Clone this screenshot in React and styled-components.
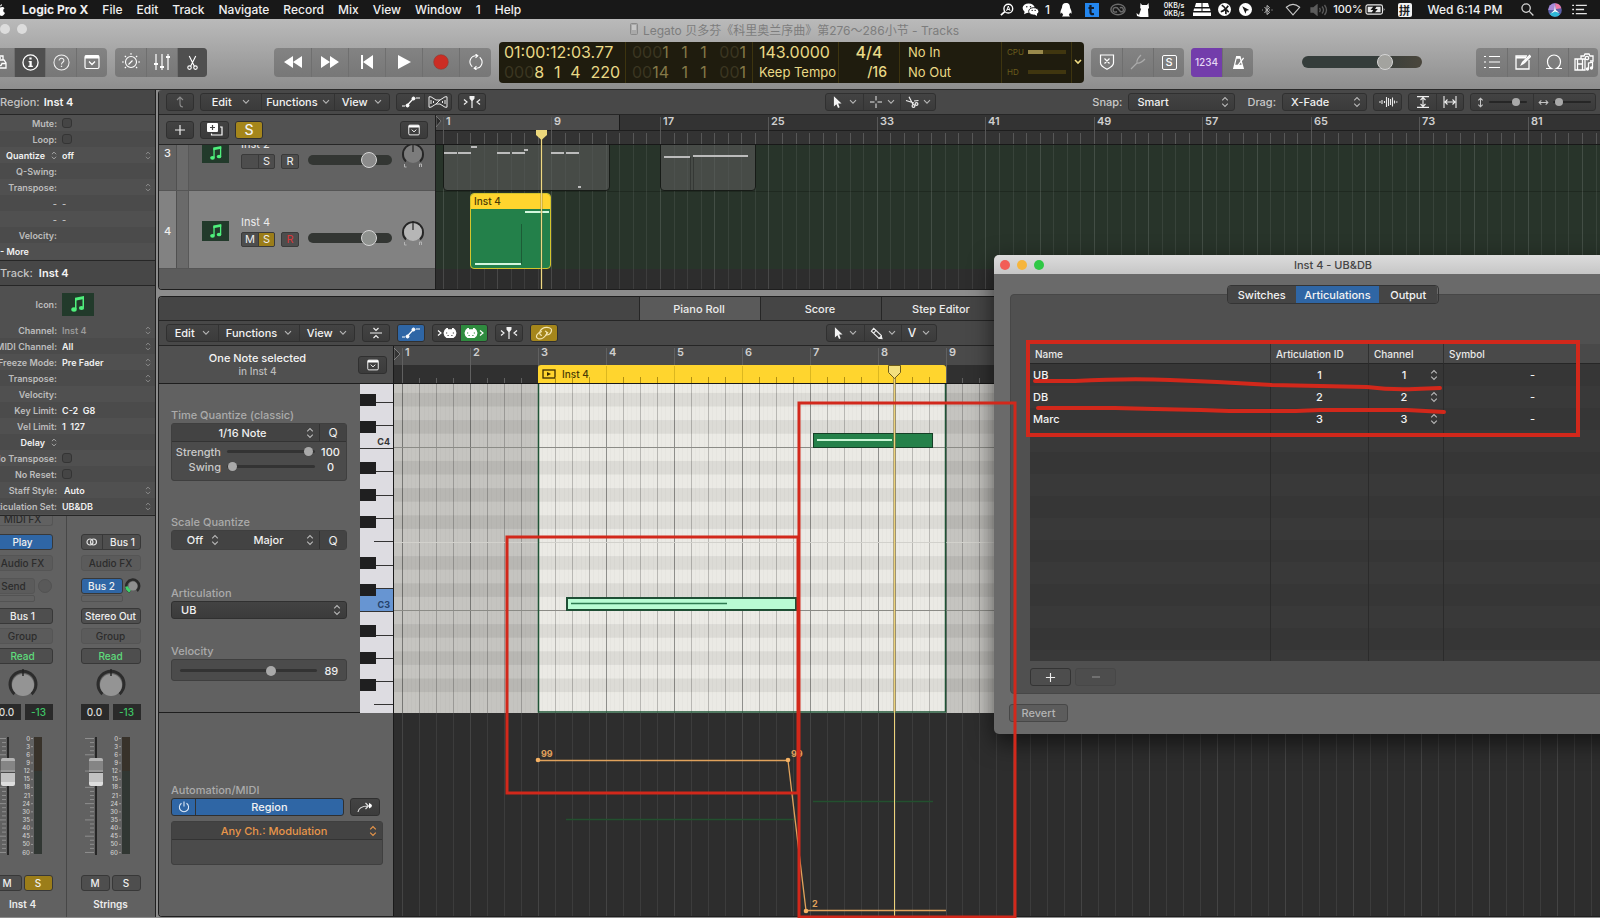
import React from "react";
import styled, { createGlobalStyle, css } from "styled-components";

const Global = createGlobalStyle`
  * { box-sizing: border-box; }
  body { margin: 0; background: #8f8f8f; font-family: Inter, "Noto Sans CJK SC", sans-serif; }
  button, input, select { font-family: inherit; margin: 0; padding: 0; border: 0; color: inherit; }
`;

/* ---------- icons ---------- */

const SHAPES = {
  apple: [12, 14, <path d="M8 1q-2 .5-2 2.600Q8 3.500 8 1M6 4.500C4 3.500 1 4 1 8c0 3 2 5 3.500 5 .8 0 1-.4 1.700-.4s1 .4 1.700.4C9.500 13 11 10.500 11 9.800 8.800 9 8.800 6.200 10.500 5.300 9.500 3.600 7.500 4 6 4.500z" fill="#fff" />],
  inbox: [16, 16, <g fill="none" stroke="#fff" strokeWidth="1.300"><path d="M4 6V2h8v4M1 14V9l2-3h10l2 3v5zM1 9.500h4l1 2h4l1-2h4M6 4h4" /></g>],
  info: [18, 18, <g><circle cx="9" cy="9" r="8" fill="none" stroke="#fff" strokeWidth="1.400" /><path d="M7.800 3.800h2.400v2H7.800zM7 7.500h3.300v5h1.200v1.200H6.600v-1.200h1.300V8.700H7z" fill="#fff" /></g>],
  help: [18, 18, <g fill="none" stroke="#f0f0f0" strokeWidth="1.100"><circle cx="9" cy="9" r="8" /><path d="M6.500 7c0-3.500 5.200-3.200 5 0-.1 1.800-2.500 1.800-2.500 4" /><path d="M9 12.500v1.300" strokeWidth="1.400" /></g>],
  drawer: [16, 16, <g fill="none" stroke="#fff"><rect x="1" y="1.500" width="14" height="13" rx="1.500" strokeWidth="1.200" /><path d="M1 3h14" strokeWidth="3" /><path d="M5 7.500l3 3 3-3" strokeWidth="1.300" /></g>],
  knobDial: [20, 18, <g fill="none" stroke="#fff" strokeWidth="1.100"><circle cx="10" cy="9" r="5.500" /><path d="M7.500 11.500l4-4M10 0v1.800M3.800 2.800l1.200 1.200M16.200 2.800L15 4M1 9h1.800M17.200 9H19M3.800 15.200L5 14M16.200 15.200L15 14" /></g>],
  mixer: [18, 18, <g stroke="#fff" strokeWidth="1.200"><path d="M3 1v16M9 1v16M15 1v16" /><path d="M1 11h4M7 14h4M13 4h4" strokeWidth="2" /></g>],
  scissors: [14, 18, <g fill="none" stroke="#fff" strokeWidth="1.200"><path d="M3.500 2l5.500 11M10.500 2L5 13" /><circle cx="3.800" cy="14.500" r="1.900" /><circle cx="10.200" cy="14.500" r="1.900" /></g>],
  rewind: [20, 14, <path d="M10 1v12L1 7zM19 1v12l-9-6z" fill="#fff" />],
  forward: [20, 14, <path d="M1 1v12l9-6zM10 1v12l9-6z" fill="#fff" />],
  toStart: [14, 14, <path d="M1 0h2v14H1zM13 0v14L3 7z" fill="#fff" />],
  play: [14, 14, <path d="M1 0v14l13-7z" fill="#fff" />],
  record: [16, 16, <circle cx="8" cy="8" r="7.300" fill="#cc2d24" stroke="#8d3a33" strokeWidth=".6" />],
  cycle: [18, 16, <g fill="none" stroke="#fff" strokeWidth="1.100"><path d="M10.500 1.800H9a6 6 0 0 0-4.500 10l.8.800M7.500 14.200H9a6 6 0 0 0 4.500-10l-.8-.8M8.500 0l2.300 1.800-2.300 2M9.500 12.200l-2.300 2 2.300 1.800" /></g>],
  shield: [16, 16, <g fill="none" stroke="#fff" strokeWidth="1.200"><path d="M1.500 1h13v8q0 3-6.500 6.300Q1.500 12 1.500 9zM5.500 4.500l5 5M10.500 4.500l-5 5" /></g>],
  fork: [16, 16, <path d="M1 15l6-6M7 9q-1-3 4-8M7 9q3 1 8-4" fill="none" stroke="#ababab" strokeWidth="1.200" />],
  metronome: [14, 16, <g><path d="M4.500 1h4.600l3.900 14H1zM5 4l-1.500 6.500h6.800L8.500 4z" fill="#fff" fillRule="evenodd" /><path d="M6.500 11l6-8" stroke="#fff" strokeWidth="1.300" /></g>],
  list: [16, 14, <g stroke="#fff" strokeWidth="1.200"><path d="M5 1.500h11M5 7h11M5 12.500h11M0 1.500h2M0 7h2M0 12.500h2" /></g>],
  note: [16, 16, <g fill="none" stroke="#fff" strokeWidth="1.300"><path d="M12 2H1v13h13V6" /><path d="M1 3.500h10" strokeWidth="2" /><path d="M15 1L7.500 8.500l-1 2 2-1L16 2" /></g>],
  loop: [18, 16, <path d="M1 14.500h5.500C3 12.500 2.500 9 2.500 7.500a6.500 6.500 0 0 1 13 0c0 1.500-.5 5-4 7H17" fill="none" stroke="#fff" strokeWidth="1.200" />],
  media: [20, 18, <g fill="none" stroke="#fff" strokeWidth="1.300"><path d="M7 6V3h3l1-2h4l1 2h3v5h-3" /><circle cx="13" cy="5" r="1.700" /><path d="M1 6h10v11H1zM3.500 6v11M8.500 6v11M3.500 11h5" /><path d="M14.500 16v-6l4-.8v5.800" /><circle cx="13.500" cy="16" r="1" fill="#fff" /><circle cx="17.500" cy="15" r="1" fill="#fff" /></g>],
  up: [12, 12, <path d="M9 11Q6 11 6 8V1M3 4l3-3 3 3" fill="none" stroke="#8b8b8b" strokeWidth="1.100" />],
  chevron: [8, 6, <path d="M1 1.200l3 3 3-3" fill="none" stroke="#b5b5b5" strokeWidth="1.100" />],
  yChevron: [8, 8, <path d="M1 2l3 3 3-3" fill="none" stroke="#f0dc82" strokeWidth="1.600" />],
  updown: [8, 12, <path d="M1.200 4.300L4 1.500l2.800 2.800M1.200 7.700L4 10.500l2.800-2.800" fill="none" stroke="#b9b9b9" strokeWidth="1.100" />],
  updownOrange: [8, 12, <path d="M1.200 4.300L4 1.500l2.800 2.800M1.200 7.700L4 10.500l2.800-2.800" fill="none" stroke="#e8964a" strokeWidth="1.200" />],
  automation: [20, 12, <g stroke="#fff" fill="#fff"><path d="M1 10h3M15 2h4" strokeWidth="1" /><path d="M6 9.500L12 3" strokeWidth="1.200" /><circle cx="6.500" cy="9.500" r="1.500" /><circle cx="12.500" cy="2.500" r="1.500" /></g>],
  flex: [20, 12, <g fill="none" stroke="#ededed"><path d="M1 .8v10.400h2L8 8h4l5 3.200h2V.8h-2L12 4H8L3 .8z" /><path d="M3 4v4M5.500 5v2M8 8l4-4M14.500 5v2M17 4v4" /></g>],
  catch: [18, 12, <g fill="none" stroke="#f2f2f2" strokeWidth="1.200"><path d="M1 3.500L4 6 1 8.500M17 3.500L14 6l3 2.500" /><path d="M6.500 0h5v2.500L9.600 5v7H8.400V5L6.500 2.500z" fill="#f2f2f2" stroke="none" /></g>],
  pointer: [10, 14, <path d="M1 0v11.500l2.800-2.600L5.600 13l1.800-.8-1.700-4H9.500z" fill="#f4f4f4" />],
  marquee: [12, 12, <path d="M6 0v4.500M6 7.500V12M0 6h4.500M7.500 6H12" stroke="#e8e8e8" />],
  snip: [14, 12, <g fill="none" stroke="#eee" strokeWidth="1.200"><path d="M1 4.500L9 7M4 .8L8 8.500M9 5l4.500-.5" /><circle cx="8.500" cy="10" r="1.400" /><circle cx="11.500" cy="8" r="1.400" /></g>],
  wave: [20, 12, <path d="M1 6h2M4 4v4M6.500 5v2M8.500 1v10M10.500 2v8M12.500 3v6M14.500 1.500v9M16.500 4.500v3M18 6h1.500" stroke="#e8e8e8" strokeWidth="1.100" />],
  fitV: [14, 12, <path d="M1 .6h12M1 11.400h12M7 1.500v9M4.500 4L7 1.500 9.500 4M4.500 8L7 10.500 9.500 8" fill="none" stroke="#ededed" strokeWidth="1.100" />],
  fitH: [14, 12, <path d="M1 0v12M13 0v12M2 6h10M4.500 3.500L2 6l2.500 2.500M9.500 3.500L12 6 9.500 8.500" fill="none" stroke="#ededed" strokeWidth="1.100" />],
  zoomV: [8, 12, <path d="M4 1v10M1.500 3.500L4 1l2.500 2.500M1.500 8.500L4 11l2.500-2.500" fill="none" stroke="#c4c4c4" strokeWidth="1.200" />],
  zoomH: [12, 8, <path d="M1 4h10M3.500 1.500L1 4l2.500 2.500M8.500 1.500L11 4 8.500 6.500" fill="none" stroke="#c4c4c4" strokeWidth="1.200" />],
  plus: [12, 12, <path d="M6 1v10M1 6h10" stroke="#eee" strokeWidth="1.200" />],
  minus: [12, 12, <path d="M2 6h8" stroke="#8f8f8f" strokeWidth="1.100" />],
  duplicate: [16, 13, <g><rect x="0" y="0" width="11" height="9" rx="1" fill="#fff" /><path d="M5.500 2v5M3 4.500h5" stroke="#444" strokeWidth="1.200" /><path d="M13 4h2v8H4.500v-1.500" fill="none" stroke="#fff" strokeWidth="1.200" /></g>],
  notes: [16, 18, <g fill="#4ff07c"><path d="M5 2.800L14 1v3L5 5.800z" /><path d="M5 3h1.500v11H5zM12.500 2H14v10.500h-1.500z" /><ellipse cx="4" cy="14.500" rx="2.700" ry="2.200" /><ellipse cx="11.500" cy="13" rx="2.600" ry="2.100" /></g>],
  collapse: [14, 12, <g fill="none" stroke="#f0f0f0" strokeWidth="1.200"><path d="M1 6h12M4.500 1L7 3.500 9.500 1M4.500 11L7 8.500 9.500 11" /></g>],
  midiIn: [20, 12, <g><path d="M1 3.500L4 6 1 8.500" fill="none" stroke="#fff" strokeWidth="1.200" /><path d="M9.500 1H11v1.200h4V1h1.500q3 2 3 5t-3 5h-7q-3-2-3-5t3-5z" fill="#fff" /><path d="M9 6h1.200M10.500 8.500h1.200M14.300 8.500h1.200M15.800 6H17" stroke="#444" strokeWidth="1.200" /></g>],
  midiOut: [20, 12, <g><path d="M16 3.500L19 6l-3 2.500" fill="none" stroke="#fff" strokeWidth="1.200" /><path d="M3.500 1H5v1.200h4V1h1.500q3 2 3 5t-3 5h-7q-3-2-3-5t3-5z" fill="#fff" /><path d="M3 6h1.200M4.500 8.500h1.200M8.300 8.500h1.200M9.800 6H11" stroke="#2f8b3f" strokeWidth="1.200" /></g>],
  link: [18, 14, <g fill="none" stroke="#f3e6b4" strokeWidth="1.200"><path d="M7 9.500Q4 9 5 5.500 7 1 12 1.300q5 .4 4.500 3.500-1 4-5.500 4.200l2-3" /><path d="M10 5q3 1.200 1 4-3 4.500-7.500 3.800-3-1-1.500-4Q3.500 6 7 5.500" /></g>],
  pencil: [14, 14, <g fill="none" stroke="#eee" strokeWidth="1.200"><path d="M1.500 4.500L4 1.500l8 7.500.8 3.500L9.500 12zM4 6.500l2.500-3" /><path d="M10 12l2.500.3-.4-2.500z" fill="#eee" /></g>],
  stereo: [12, 8, <g fill="none" stroke="#e4e4e4" strokeWidth="1.200"><circle cx="4" cy="4" r="3" /><circle cx="7.500" cy="4" r="3" /></g>],
  power: [12, 12, <path d="M6 .5v5M3.500 2.300a4.600 4.600 0 1 0 5 0" fill="none" stroke="#dce8f6" strokeWidth="1.100" />],
  curve: [16, 12, <g fill="none" stroke="#ddd" strokeWidth="1.200"><path d="M1 11q1-6 10-6M8.500 2l3 3-3 3" /><path d="M12 2q6 2.500 0 5.500" fill="#fff" stroke="none" /></g>],
  clip: [14, 10, <g><rect x="1" y="1" width="12" height="8" fill="none" stroke="#3a2c00" strokeWidth="1.300" /><path d="M5 3v4l4-2z" fill="#3a2c00" /></g>],
  doc: [8, 12, <g><rect x=".5" y=".5" width="7" height="11" rx="1" fill="#a9a9a9" stroke="#8a8a8a" /><path d="M2 2h4v5H2z" fill="#c6c6c6" /></g>],
  magA: [16, 14, <g fill="none" stroke="#fff"><circle cx="9.500" cy="6" r="5" strokeWidth="1.600" /><path d="M5.500 9.500L1 13.500" strokeWidth="2" /><path d="M7.500 8.500l2-5.500 2 5.500M8.200 7h2.600" strokeWidth="1.100" /></g>],
  wechat: [18, 14, <g fill="#fff"><ellipse cx="7" cy="5.500" rx="6.500" ry="5" /><path d="M2 12l1-4 4 2z" /><ellipse cx="12.500" cy="9" rx="5.500" ry="4" stroke="#181818" /><path d="M16 14l-3-2 3-1z" /><g fill="#181818"><circle cx="5" cy="4" r=".8" /><circle cx="9" cy="4" r=".8" /><circle cx="10.800" cy="8" r=".7" /><circle cx="14" cy="8" r=".7" /></g></g>],
  qq: [12, 14, <path d="M6 0C3 0 2 2 2 4.500 1.500 6 0 8 .5 10.500q.3.500 1.500-1 .2 1.500 1.200 2.200L2 13.500h8l-1.200-1.800Q9.800 11 10 9.500q1.200 1.500 1.500 1C12 8 10.500 6 10 4.500 10 2 9 0 6 0z" fill="#fff" />],
  tApp: [14, 14, <g><rect width="14" height="14" fill="#2386ee" /><path d="M5.500 2v7.500q0 2 3.500 1.500M3.500 5H9" fill="none" stroke="#141c28" strokeWidth="2.200" /></g>],
  cc: [18, 14, <g fill="none" stroke="#6b6b6b" strokeWidth="1.600"><ellipse cx="9" cy="7" rx="8" ry="6" /><path d="M8 9.500Q3.500 11 3.500 7.500T8 5l4 4.500q3.500.500 3-2.500T11 5" /></g>],
  cat: [14, 14, <path d="M4.500 0l1.500 2h5l1.500-2 .5 5-1 1 .5 8H4.500L1 13l-.5-3L3 12l2-6-.8-1z" fill="#fff" />],
  disk: [18, 13, <path d="M3 0h5.500v4H1.800zM9.500 0H15l1.200 4H9.500zM1 5.500h7.500V8H.5zM9.500 5.500H17l.5 2.500h-8zM0 9.500h18V13H0z" fill="#fff" />],
  xCircle: [16, 14, <g><circle cx="8" cy="7" r="7" fill="#fff" /><path d="M5 2.500q5 2 4.500 9.500M12 3Q9 8 4 9.500M10 7l2.500 3" stroke="#181818" strokeWidth="1.800" fill="none" /></g>],
  compass: [14, 14, <g><circle cx="7" cy="7" r="7" fill="#fff" /><path d="M3.500 3.500l7.500 4-3 .8-1 3.200z" fill="#181818" /></g>],
  bt: [12, 14, <path d="M3.500 4l5 5.500-2.500 2V2.500l2.500 2-5 5.500M1 7h.8M4 7h.6M8 7h1M10.500 7h1" fill="none" stroke="#bdbdbd" />],
  wifi: [18, 14, <path d="M1.500 4.500Q9-2 16.500 4.500L9 13z" fill="none" stroke="#c8c8c8" strokeWidth="1.200" />],
  vol: [18, 12, <g stroke="#5c5c5c" fill="none" strokeWidth="1.300"><path d="M1 4h2.500L7 1v10L3.500 8H1z" fill="#5c5c5c" /><path d="M9.500 4q1.500 2 0 4M12 2.500q3 3.500 0 7M14.500 1q4 5 0 10" /></g>],
  battery: [22, 12, <g><rect x=".6" y="1" width="18" height="10" rx="2" fill="none" stroke="#e9e9e9" strokeWidth="1.200" /><path d="M20 4v4q1.800-2 0-4zM2.500 3h6l-3 3.500h3L7 9H2.500zM16.500 9h-6l3-3.500h-3L12 3h4.500z" fill="#e9e9e9" /></g>],
  search: [14, 14, <g fill="none" stroke="#d5d5d5" strokeWidth="1.400"><circle cx="5.500" cy="5.500" r="4.500" /><path d="M9 9l4.300 4.500" /></g>],
  siri: [16, 14, <g><circle cx="8" cy="7" r="6.800" fill="#5b5fa8" /><path d="M8 .2a6.800 6.800 0 0 1 6.300 5L9 6z" fill="#f07aa4" /><path d="M1.200 7A6.800 6.800 0 0 1 8 .2L8 7z" fill="#a88ad8" /><path d="M2.500 11L8 7l5 4.500a6.800 6.800 0 0 1-10.500-.5z" fill="#2fb9d8" /><path d="M8 1.500l.8 5.500 3.700 3-4.500-1.500L4 10.500 7.300 7z" fill="#fff" /></g>],
  menuList: [16, 12, <path d="M0 1.500h2M4 1.500h12M0 6h2M4 6h9M0 10.500h2M4 10.500h12" stroke="#e3e3e3" strokeWidth="1.600" />],
};

function Icon({ name, scale = 1 }) {
  const [w, h, body] = SHAPES[name];
  return (
    <svg width={Math.round(w * scale)} height={Math.round(h * scale)} viewBox={`0 0 ${w} ${h}`} aria-hidden="true">
      {body}
    </svg>
  );
}

/* ---------- shell ---------- */

const App_ = styled.div`
  position: relative;
  display: flex;
  flex-direction: column;
  min-height: 100vh;
  overflow: hidden;
  color: #ececec;
  font-size: 11px;
  svg { display: block; flex: none; }
`;

const MenuBar = styled.nav`
  display: flex;
  align-items: center;
  height: 19px;
  padding-right: 6px;
  background: #181818;
  color: #f0f0f0;
  font-size: 12px;
  line-height: 19px;
  white-space: nowrap;
`;
const AppleMark = styled.span`
  display: flex;
  justify-content: flex-end;
  width: 6px;
  margin-right: 9px;
  overflow: hidden;
`;
const MenuItem = styled.a`
  padding: 0 7px;
  color: inherit;
  text-decoration: none;
  font-weight: ${(p) => (p.$bold ? 700 : 500)};
`;
const Spacer = styled.div`flex: ${(p) => p.$grow || 1} 1 0;`;
const Status = styled.span`
  display: flex;
  justify-content: center;
  align-items: center;
  width: ${(p) => p.$w}px;
  font-size: ${(p) => p.$size || 12}px;
  font-weight: 500;
`;
const Speed = styled.span`
  font-size: 7px;
  line-height: 8px;
  font-weight: 600;
`;
const Ime = styled.span`
  width: 14px;
  height: 14px;
  border-radius: 2px;
  background: #f2f2f2;
  color: #1c1c1c;
  font: 700 11px/14px "Noto Sans CJK SC", sans-serif;
  text-align: center;
`;

const Chrome = styled.header`
  height: 71px;
  border-bottom: 1px solid #2a2a2a;
  background: linear-gradient(#bababa, #8e8e8e);
`;
const TitleRow = styled.div`
  display: flex;
  align-items: center;
  height: 20px;
  color: #7d7d7d;
  font-size: 12px;
`;
const Light = styled.i`
  width: ${(p) => p.$size || 10}px;
  height: ${(p) => p.$size || 10}px;
  border-radius: 50%;
  background: ${(p) => p.$color};
`;
const PaleLights = styled.div`
  display: flex;
  gap: 7px;
  width: 27px;
`;
const Title = styled.h1`
  display: flex;
  flex: 1;
  justify-content: center;
  align-items: center;
  gap: 5px;
  margin: 0 38px 0 0;
  font-size: 12px;
  font-weight: 400;
`;
const MainBar = styled.div`
  display: flex;
  align-items: center;
  height: 46px;
  padding-right: 2px;
`;
const BigGroup = styled.div`
  display: flex;
  height: 29px;
  margin-right: ${(p) => p.$mr || 0}px;
  border-radius: ${(p) => (p.$flush ? "0 4px 4px 0" : "4px")};
  overflow: hidden;
  background: linear-gradient(#838383, #777);
`;
const BigButton = styled.button`
  display: flex;
  justify-content: center;
  align-items: center;
  width: ${(p) => p.$w || 31}px;
  overflow: hidden;
  background: ${(p) => p.$bg || "transparent"};
  color: ${(p) => p.$fg || "#fff"};
  font-size: 10px;
  font-weight: 500;
  & + & { border-left: 1px solid #6f6f6f; }
`;
const HalfIcon = styled.span`
  width: 14px;
  display: flex;
  justify-content: flex-end;
  padding-right: 7px;
`;
const SquareS = styled.span`
  width: 15px;
  height: 15px;
  border: 1px solid #fff;
  border-radius: 2px;
  font-size: 11px;
  line-height: 13px;
`;

/* ---------- LCD ---------- */

const Lcd = styled.div`
  display: flex;
  width: 585px;
  height: 41px;
  margin-right: 7px;
  border-radius: 4px;
  overflow: hidden;
  background: #1f1c0e;
  color: #e9d987;
`;
const LcdCell = styled.div`
  display: flex;
  flex-direction: column;
  justify-content: space-evenly;
  width: ${(p) => p.$w}px;
  padding: 0 ${(p) => p.$px || 5}px;
  border-right: 1px solid #3d340f;
  font-size: 16px;
  font-weight: ${(p) => p.$weight || 400};
  line-height: 20px;
  white-space: nowrap;
  color: ${(p) => p.$color || "inherit"};
`;
const LcdRow = styled.div`
  display: flex;
  justify-content: ${(p) => p.$justify || "space-between"};
  align-items: center;
  font-size: ${(p) => p.$size || 16}px;
`;
const Dim = styled.span`color: #3b3621;`;
const Load = styled.div`
  width: 38px;
  height: 4px;
  background: #40360f;
`;
const LoadFill = styled.div`
  width: ${(p) => p.$w}px;
  height: 4px;
  background: #9a8a4c;
`;
const LcdTag = styled.span`
  color: #6b5c1c;
  font-size: 8px;
`;
const LcdMenu = styled.button`
  display: flex;
  align-items: center;
  justify-content: center;
  width: 12px;
  background: none;
`;

/* ---------- shared controls ---------- */

const thumb = css`
  appearance: none;
  width: ${(p) => p.$thumb}px;
  height: ${(p) => p.$thumb}px;
  margin-top: ${(p) => Math.round((p.$track - p.$thumb) / 2)}px;
  border: ${(p) => (p.$ring ? "1px solid #d6d6d6" : "0")};
  border-radius: 50%;
  background: ${(p) => p.$knob || "#a9a9a9"};
`;
const Range = styled.input.attrs({ type: "range" })`
  appearance: none;
  display: block;
  width: ${(p) => p.$w}px;
  height: ${(p) => Math.max(p.$thumb, p.$track)}px;
  background: none;
  &::-webkit-slider-runnable-track {
    height: ${(p) => p.$track}px;
    border-radius: ${(p) => Math.round(p.$track / 2)}px;
    background: ${(p) => p.$bg || "#333"};
  }
  &::-webkit-slider-thumb { ${thumb} }
`;

const Bar = styled.div`
  display: flex;
  align-items: center;
  gap: ${(p) => p.$gap || 6}px;
  height: 25px;
  padding: 0 4px 0 7px;
  border-bottom: 1px solid #262626;
  background: #484848;
`;
const Group = styled.div`
  display: flex;
  flex: none;
  height: 18px;
  border: 1px solid #303030;
  border-radius: 3px;
  overflow: hidden;
  background: linear-gradient(#434343, #3b3b3b);
`;
const Tool = styled.button`
  display: flex;
  flex: none;
  justify-content: space-evenly;
  align-items: center;
  width: ${(p) => p.$w}px;
  background: ${(p) => p.$bg || "transparent"};
  color: #f2f2f2;
  font-size: ${(p) => p.$size || 11}px;
  font-weight: 500;
  line-height: 16px;
  & + & { border-left: 1px solid ${(p) => (p.$noline ? "transparent" : "#333")}; }
`;
const BarLabel = styled.label`
  color: #c9c9c9;
  font-size: 11px;
  font-weight: 500;
`;
const SelectBox = styled.span`
  position: relative;
  display: flex;
  align-items: center;
  width: ${(p) => (p.$w ? p.$w + "px" : "auto")};
  flex: ${(p) => (p.$w ? "none" : 1)};
  height: ${(p) => p.$h || 18}px;
  border: ${(p) => (p.$bare ? "0" : "1px solid #303030")};
  border-radius: 3px;
  background: ${(p) => (p.$bare ? "none" : "linear-gradient(#434343, #3b3b3b)")};
  svg { position: absolute; right: ${(p) => (p.$bare ? 4 : 5)}px; pointer-events: none; opacity: ${(p) => (p.$bare ? 0.7 : 1)}; }
`;
const SelectField = styled.select`
  appearance: none;
  width: 100%;
  height: 100%;
  padding: 0 ${(p) => (p.$center ? 6 : 16)}px 0 ${(p) => p.$pl || 0}px;
  background: none;
  color: ${(p) => p.$color || "#f0f0f0"};
  font-size: ${(p) => p.$size || 11}px;
  font-weight: ${(p) => p.$weight || 500};
  text-align-last: ${(p) => (p.$center ? "center" : "left")};
`;
function Picker({ id, label, value, w, h, pl, size, weight, center, bare, color, icon = "updown", scale }) {
  return (
    <SelectBox $w={w} $h={h} $bare={bare}>
      <SelectField id={id} aria-label={label} $pl={pl} $size={size} $weight={weight} $center={center} $color={color} defaultValue={value}>
        <option value={value}>{value}</option>
      </SelectField>
      <Icon name={icon} scale={scale} />
    </SelectBox>
  );
}

/* ---------- inspector ---------- */

const Body = styled.div`
  display: flex;
  flex: 1;
  gap: 2px;
  padding-bottom: 2px;
  background: #8c8c8c;
`;
const Side = styled.aside`
  display: flex;
  flex: none;
  flex-direction: column;
  width: 156px;
  overflow: hidden;
  border-right: 1px solid #202020;
  background: #616161;
`;
const SideHead = styled.h2`
  display: flex;
  align-items: center;
  gap: ${(p) => p.$gap}px;
  height: 25px;
  margin: 0;
  border-bottom: 1px solid #262626;
  background: #474747;
  color: #c4c4c4;
  font-size: 11px;
  font-weight: 500;
  strong { color: #f4f4f4; font-weight: 600; }
`;
const Props = styled.div`
  padding-bottom: ${(p) => p.$pb || 0}px;
  border-bottom: 1px solid #262626;
  background: #4f4f4f;
`;
const PropRow = styled.div`
  display: flex;
  align-items: center;
  gap: 5px;
  height: ${(p) => p.$h || 16}px;
  background: ${(p) => (p.$alt ? "#4b4b4b" : "#505050")};
  font-size: 9px;
  font-weight: 600;
  white-space: nowrap;
`;
const PropName = styled.label`
  display: flex;
  flex: none;
  justify-content: flex-end;
  align-items: center;
  gap: 6px;
  width: 57px;
  overflow: hidden;
  color: ${(p) => (p.$strong ? "#f2f2f2" : "#bdbdbd")};
`;
const PropText = styled.span`
  color: ${(p) => p.$color || "#f2f2f2"};
  white-space: pre;
`;
const Check = styled.input.attrs({ type: "checkbox" })`
  appearance: none;
  width: 10px;
  height: 10px;
  border: 1px solid #343434;
  border-radius: 3px;
  background: #454545;
`;
const Tile = styled.span`
  display: flex;
  flex: none;
  justify-content: center;
  align-items: center;
  width: ${(p) => p.$w}px;
  height: ${(p) => p.$h}px;
  background: #223a2b;
`;

const REGION_ROWS = [
  { name: "Mute:", check: true },
  { name: "Loop:", check: true },
  { name: "Quantize", strong: true, pick: "off" },
  { name: "Q-Swing:" },
  { name: "Transpose:", pick: "\u00a0" },
  { name: "-", text: "-", dim: true },
  { name: "-", text: "-", dim: true },
  { name: "Velocity:" },
];
const TRACK_ROWS = [
  { name: "Channel:", pick: "Inst 4", color: "#9b9b9b" },
  { name: "MIDI Channel:", pick: "All" },
  { name: "Freeze Mode:", pick: "Pre Fader" },
  { name: "Transpose:", pick: "\u00a0" },
  { name: "Velocity:" },
  { name: "Key Limit:", text: "C-2  G8" },
  { name: "Vel Limit:", text: "1  127" },
  { name: "Delay", strong: true },
  { name: "No Transpose:", check: true },
  { name: "No Reset:", check: true },
  { name: "Staff Style:", pick: "Auto", pl: 2 },
  { name: "Articulation Set:", pick: "UB&DB" },
];
function Rows({ rows, group }) {
  return rows.map((r, i) => {
    const id = `${group}-${i}`;
    return (
      <PropRow key={id} $alt={i % 2 === 1}>
        <PropName htmlFor={r.check || r.pick ? id : undefined} $strong={r.strong}>
          {r.name}
          {r.strong && <Icon name="updown" scale={0.75} />}
        </PropName>
        {r.check && <Check id={id} />}
        {r.text && <PropText $color={r.dim && "#bdbdbd"}>{r.text}</PropText>}
        {r.pick && <Picker id={id} bare value={r.pick} h={16} size={9} weight={600} pl={r.pl} color={r.color} scale={0.75} />}
      </PropRow>
    );
  });
}

/* ---------- channel strips ---------- */

const Strips = styled.div`
  display: flex;
  flex: 1;
  justify-content: flex-end;
  padding-right: 1px;
`;
const Strip = styled.div`
  display: flex;
  flex: none;
  flex-direction: column;
  align-items: center;
  width: 88px;
  padding: 0 14px;
  border-left: 1px solid #474747;
  font-weight: 500;
`;
const Slot = styled.button`
  display: flex;
  justify-content: center;
  align-items: center;
  width: ${(p) => p.$w || 60}px;
  height: 16px;
  margin-bottom: ${(p) => p.$mb || 0}px;
  border: 1px solid ${(p) => (p.$off ? "#555" : "#383838")};
  border-radius: 3px;
  background: ${(p) => p.$bg || (p.$off ? "#5b5b5b" : "#4e4e4e")};
  color: ${(p) => p.$fg || (p.$off ? "#2c2c2c" : "#f0f0f0")};
  font-size: ${(p) => p.$size || 10}px;
  font-weight: 500;
  white-space: nowrap;
`;
const TopSlot = styled.div`
  height: 18px;
  width: 60px;
`;
const SlotCut = styled.div`
  width: 60px;
  height: 10px;
  margin-bottom: 8px;
  border: 1px solid #555;
  border-top: 0;
  border-radius: 0 0 3px 3px;
  color: #2c2c2c;
  font-size: 10px;
  line-height: 6px;
  text-align: center;
`;
const SplitMark = styled.span`
  display: flex;
  align-items: center;
  height: 14px;
  margin-right: 7px;
  padding-right: 4px;
  border-right: 1px solid #383838;
`;
const Pair = styled.div`
  display: flex;
  align-items: center;
  justify-content: space-between;
  width: 60px;
  margin-bottom: ${(p) => p.$mb || 0}px;
`;
const SubSlot = styled.div`
  align-self: flex-start;
  width: 42px;
  height: 7px;
  margin: 1px 0 6px;
  border: 1px solid #535353;
  border-radius: 2px;
`;
const Level = styled.output`
  width: 28px;
  height: 16px;
  background: #2a2a2a;
  color: ${(p) => p.$fg || "#dcdcdc"};
  font-size: 10px;
  line-height: 16px;
  text-align: center;
`;
const FaderBox = styled.div`
  position: relative;
  width: 60px;
  height: 120px;
  margin-bottom: 19px;
`;
const Fader = styled.input.attrs({ type: "range" })`
  appearance: none;
  position: absolute;
  left: 8px;
  top: 1px;
  width: 14px;
  height: 118px;
  writing-mode: vertical-lr;
  direction: rtl;
  background: none;
  &::-webkit-slider-thumb {
    appearance: none;
    width: 14px;
    height: 28px;
    border-radius: 2px;
    background: linear-gradient(#b5b5b5 0 3px, #858585 3px 12px, #9a9a9a 12px 14px, #4a4a4a 14px 15px, #c2c2c2 15px 24px, #dedede 24px);
  }
`;
const StripName = styled.div`
  margin-top: 6px;
  font-size: 10px;
  font-weight: 600;
  line-height: 14px;
`;
const DB = ["0", "3", "6", "9", "12", "15", "18", "21", "24", "30", "35", "40", "45", "50", "60"];

function FaderScale() {
  return (
    <svg width="60" height="120">
      {Array.from({ length: 29 }, (_, i) => (
        <rect key={i} x={i % 4 ? 9 : 4} y={2 + i * 4.07} width={i % 4 ? 4 : 9} height="1" fill="#8e8e8e" />
      ))}
      <rect x="14" y="1" width="2" height="118" fill="#262626" />
      <rect x="41" y="1" width="8" height="117" fill="#313733" />
      <rect x="41" y="1" width="8" height="34" fill="#38322a" />
      {DB.map((d, i) => (
        <text key={d} x="37" y={4.500 + i * 8.150} fontSize="6" textAnchor="end" fill="#cfcfcf">{d}</text>
      ))}
      {DB.map((d, i) => (
        <rect key={d} x="38" y={2 + i * 8.150} width="2" height="1" fill="#999" />
      ))}
    </svg>
  );
}
const Dial = styled.svg`margin-bottom: 6px;`;
function PanDial() {
  return (
    <Dial width="32" height="30">
      <path d="M7.500 26A13 13 0 1 1 24.500 26" fill="none" stroke="#2c2c2c" strokeWidth="3" />
      <circle cx="16" cy="17" r="11" fill="#949494" />
      <path d="M16 1v7" stroke="#222" strokeWidth="1.400" />
    </Dial>
  );
}
function ChannelStrip({ name, instrument, send, output, solo }) {
  return (
    <Strip>
      {instrument ? <SlotCut>MIDI FX</SlotCut> : <TopSlot />}
      {instrument ? (
        <Slot $bg="#2f66a5" $mb={5}>Play</Slot>
      ) : (
        <Slot $mb={5}><SplitMark><Icon name="stereo" /></SplitMark>Bus 1</Slot>
      )}
      <Slot $off $mb={7}>Audio FX</Slot>
      <Pair>
        <Slot $w={42} $off={!send} $bg={send && "#2f66a5"}>{send || "Send"}</Slot>
        <svg width="16" height="16">
          {send ? (
            <g fill="none">
              <circle cx="8" cy="8" r="4.500" fill="#8f8f8f" />
              <path d="M5 14A6.500 6.500 0 1 1 12 13" stroke="#2a2a2a" strokeWidth="2.500" />
              <path d="M5 13.500Q2 11.500 1.500 8.500" stroke="#3fd46c" strokeWidth="3" />
            </g>
          ) : (
            <circle cx="8" cy="8" r="6.500" fill="#595959" stroke="#525252" />
          )}
        </svg>
      </Pair>
      <SubSlot />
      <Slot $mb={4}>{output}</Slot>
      <Slot $off $mb={4}>Group</Slot>
      <Slot $fg="#5fdc7c" $mb={4}>Read</Slot>
      <PanDial />
      <Pair $mb={16}>
        <Level>0.0</Level>
        <Level $fg="#3fc566">-13</Level>
      </Pair>
      <FaderBox>
        <FaderScale />
        <Fader aria-label={`${name} volume`} min="0" max="100" defaultValue="77" />
      </FaderBox>
      <Pair>
        <Slot $w={29}>M</Slot>
        <Slot $w={29} $bg={solo && "#9b7d19"}>S</Slot>
      </Pair>
      <StripName>{name}</StripName>
    </Strip>
  );
}

/* ---------- arrangement ---------- */

const Main = styled.main`
  display: flex;
  flex: 1;
  min-width: 0;
  flex-direction: column;
  gap: 6px;
`;
const Panel = styled.section`
  display: flex;
  flex-direction: column;
  flex: ${(p) => (p.$fill ? 1 : "none")};
  min-height: 0;
  overflow: hidden;
  border: solid #1e1e1e;
  border-width: ${(p) => (p.$fill ? "1px 0 1px 1px" : "0 0 1px 1px")};
  border-radius: 4px 0 0 4px;
`;
const Split = styled.div`
  display: flex;
  flex: 1;
  min-width: 0;
`;
const TrackSide = styled.div`
  flex: none;
  width: 277px;
  border-right: 1px solid #1e1e1e;
  background: #616161;
`;
const TrackTools = styled.div`
  display: flex;
  align-items: center;
  gap: 6px;
  height: 30px;
  padding: 0 7px;
  border-bottom: 1px solid #262626;
  background: #525252;
`;
const TrackList = styled.div`
  display: flex;
  flex-direction: column;
  justify-content: flex-end;
  height: 144px;
  overflow: hidden;
`;
const Track = styled.div`
  display: flex;
  flex: none;
  height: 78px;
  border-bottom: 1px solid #555;
  background: ${(p) => (p.$on ? "#828282" : "#626262")};
`;
const TrackNo = styled.span`
  width: 18px;
  border-right: 1px solid #505050;
  padding-left: 5px;
  color: #efefef;
  font-size: 11px;
  font-weight: 500;
  line-height: 80px;
`;
const Grip = styled.span`
  width: 12px;
  border-right: 1px solid #585858;
  background: #6a6a6a;
`;
const TrackIcon = styled.div`padding: 30px 12px 0 13px;`;
const TrackBody = styled.div`
  width: 58px;
  margin-right: 9px;
  padding-top: 23px;
`;
const TrackName = styled.div`
  font-size: 11px;
  line-height: 16px;
`;
const Mini = styled.span`
  display: flex;
  gap: 6px;
  margin-top: 2px;
`;
const MiniGroup = styled.span`
  display: flex;
  height: 15px;
  border: 1px solid #3a3a3a;
  border-radius: 2px;
  overflow: hidden;
  background: #4d4d4d;
`;
const MiniButton = styled.button`
  width: 16px;
  background: ${(p) => p.$bg || "none"};
  color: ${(p) => p.$fg || "#efefef"};
  font-size: 11px;
  line-height: 13px;
  & + & { border-left: 1px solid #3a3a3a; }
`;
const TrackVol = styled.div`padding: 39px 7px 0 0;`;
const TrackPan = styled.div`padding-top: 27px;`;
const Blank = styled.div`
  flex: none;
  height: 20px;
  background: #5c5c5c;
`;

function TrackRow({ no, name, on }) {
  return (
    <Track $on={on}>
      <TrackNo>{no}</TrackNo>
      <Grip />
      <TrackIcon><Tile $w={27} $h={20}><Icon name="notes" scale={0.9} /></Tile></TrackIcon>
      <TrackBody>
        <TrackName>{name}</TrackName>
        <Mini>
          <MiniGroup>
            <MiniButton aria-label="Mute">{on ? "M" : ""}</MiniButton>
            <MiniButton $bg={on && "#9b7d19"}>S</MiniButton>
          </MiniGroup>
          <MiniGroup><MiniButton $fg={on && "#d8373a"}>R</MiniButton></MiniGroup>
        </Mini>
      </TrackBody>
      <TrackVol>
        <Range aria-label={`${name} volume`} $w={84} $track={10} $thumb={16} $ring $bg="#333633" $knob={on ? "#8f928f" : "#8b8b8b"} defaultValue="78" />
      </TrackVol>
      <TrackPan>
        <svg width="28" height="32">
          <path d="M7 21.500A10 10 0 1 1 21 21.500" fill="none" stroke="#262626" strokeWidth="2" />
          <circle cx="14" cy="14" r="9" fill={on ? "#b6b6b6" : "#7c7c7c"} />
          <path d="M14 3v9" stroke="#222" strokeWidth="1.200" />
          <path d="M5.500 24v3h2M20.500 27v-3h2v3" fill="none" stroke="#b4b4b4" />
        </svg>
      </TrackPan>
    </Track>
  );
}

const Canvas = styled.div`
  position: relative;
  display: flex;
  flex: 1;
  min-width: 0;
  flex-direction: column;
  overflow: hidden;
`;
const Ruler = styled.div`
  position: relative;
  height: ${(p) => p.$h}px;
  border-bottom: 1px solid #181818;
  background: ${(p) => p.$bg};
  overflow: hidden;
  svg { position: absolute; inset: 0; }
`;
const BarNo = styled.span`
  position: absolute;
  top: ${(p) => p.$top}px;
  color: #cfcfcf;
  font-size: 11px;
  font-weight: 600;
  line-height: 12px;
`;
const Lanes = styled.div`
  position: relative;
  flex: 1;
  overflow: hidden;
  background: linear-gradient(#28342a 0 46px, #1f2920 46px 47px, #28342a 47px 124px, #2d2d2d 124px);
`;
const Region = styled.div`
  position: absolute;
  top: ${(p) => p.$top}px;
  left: ${(p) => p.$left}px;
  width: ${(p) => p.$w}px;
  height: ${(p) => p.$h}px;
  overflow: hidden;
  border: 1px solid ${(p) => (p.$on ? "#d4c42c" : "#171b17")};
  border-radius: 4px;
  background: ${(p) => (p.$on ? "#23804a" : "rgba(92, 92, 92, 0.6)")};
  svg { position: absolute; inset: 0; }
`;
const RegionName = styled.div`
  height: 15px;
  padding-left: 3px;
  background: #ffd52e;
  color: #4a3b05;
  font-size: 10px;
  font-weight: 500;
  line-height: 15px;
`;
const Playhead = styled.svg`
  position: absolute;
  top: ${(p) => p.$top}px;
  left: ${(p) => p.$left}px;
`;

const ARR_BAR = 13.560;
function Arrangement() {
  return (
    <Canvas>
      <Ruler $h={30} $bg="#333">
        <svg width="100%" height="30">
          <rect width="183" height="15" fill="#4b4b4b" />
          <rect y="15" width="100%" height="1" fill="#1e1e1e" />
          <rect x="183" width="1" height="15" fill="#1a1a1a" />
          <path d="M0 1l5 5-5 6z" fill="#2b2b2b" stroke="#8a8a8a" strokeWidth=".7" />
          {Array.from({ length: 150 }, (_, i) => (
            <rect key={i} x={Math.round(7 + i * ARR_BAR)} y={i % 8 ? 18 : 2} width="1" height={i % 8 ? 11 : 27} fill="#575757" />
          ))}
        </svg>
        {Array.from({ length: 18 }, (_, i) => (
          <BarNo key={i} $top={0} style={{ left: Math.round(10 + i * 8 * ARR_BAR) }}>{i * 8 + 1}</BarNo>
        ))}
      </Ruler>
      <Lanes>
        <svg width="100%" height="144">
          {Array.from({ length: 150 }, (_, i) => (
            <rect key={i} x={Math.round(7 + i * ARR_BAR)} width="1" height="144" fill="#fff" opacity={i % 4 ? 0.08 : 0.13} />
          ))}
        </svg>
        <Region $left={7} $top={-30} $w={167} $h={76}>
          <svg width="165" height="74">
            <path d="M0 37h13M14 37h13M53 37h13M68 37h13M107 37h13M122 37h13M27 31h6M80 34h4M134 71h3" stroke="#bcbcbc" strokeWidth="2" />
          </svg>
        </Region>
        <Region $left={224} $top={-30} $w={96} $h={76}>
          <svg width="94" height="74">
            <path d="M3 41h26M32 40h55" stroke="#bcbcbc" strokeWidth="2" />
            <path d="M29.500 41v33M32.500 41v33" stroke="#353835" />
          </svg>
        </Region>
        <Region $on $left={34} $top={48} $w={81} $h={76}>
          <RegionName>Inst 4</RegionName>
          <svg width="79" height="74">
            <path d="M4 70h46M54 18h24" stroke="#d3f7de" strokeWidth="2" />
            <path d="M50.500 30v40" stroke="#1c5c36" />
          </svg>
        </Region>
      </Lanes>
      <Playhead $left={99} $top={14} width="13" height="160">
        <path d="M6.500 9v151" stroke="#7d6f3c" strokeWidth="2" opacity=".6" />
        <path d="M6.500 9v151" stroke="#efd883" />
        <path d="M1 1h11v5l-5.500 5L1 6z" fill="#ecd87c" />
      </Playhead>
    </Canvas>
  );
}

/* ---------- piano roll ---------- */

const Tabs = styled.div`
  display: flex;
  height: 24px;
  border-bottom: 1px solid #262626;
  background: #454545;
`;
const Tab = styled.button`
  width: 121px;
  padding-right: 3px;
  border-left: 1px solid #262626;
  background: ${(p) => (p.$on ? "#5a5a5a" : "none")};
  color: #ececec;
  font-size: 11px;
  font-weight: 500;
`;
const RollSide = styled.div`
  display: flex;
  flex: none;
  flex-direction: column;
  width: 235px;
  border-right: 1px solid #1a1a1a;
  background: #616161;
`;
const RollHead = styled.div`
  display: flex;
  align-items: center;
  height: 38px;
  padding: 0 6px 0 0;
  border-bottom: 1px solid #1e1e1e;
  background: #505050;
  text-align: center;
`;
const RollInfo = styled.div`
  flex: 1;
  padding-right: 2px;
  font-size: 11px;
  font-weight: 500;
  line-height: 13px;
  color: #f4f4f4;
  small { display: block; color: #bcbcbc; font-size: 10px; }
`;
const RollMid = styled.div`
  display: flex;
  height: 329px;
  border-bottom: 1px solid #1e1e1e;
`;
const RollForm = styled.div`
  flex: 1;
  padding: 23px 13px 0 12px;
`;
const FieldName = styled.label`
  display: block;
  margin-top: ${(p) => p.$mt || 0}px;
  color: #ababab;
  font-size: 11px;
  font-weight: 500;
  line-height: 16px;
`;
const Sheet = styled.div`
  border: 1px solid #3f3f3f;
  border-radius: 3px;
  background: #4b4b4b;
  padding-bottom: ${(p) => p.$pb || 0}px;
`;
const SheetRow = styled.div`
  display: flex;
  height: 18px;
  border-bottom: ${(p) => (p.$line ? "1px solid #333" : "0")};
  background: #434343;
  & > * + * { border-left: 1px solid #333; }
`;
const FlatPick = styled(SelectBox)`
  height: 17px;
  border: 0;
  border-radius: 0;
  background: none;
`;
const QButton = styled.button`
  width: 27px;
  background: none;
  font-size: 12px;
  color: #ececec;
`;
const SliderLine = styled.div`
  display: flex;
  align-items: center;
  height: 15px;
  margin-top: ${(p) => p.$mt || 0}px;
  font-size: 11px;
  font-weight: 500;
  label { width: 49px; margin-right: 6px; text-align: right; color: #c9c9c9; }
  output { flex: 1; text-align: center; color: #f2f2f2; }
`;
const AutoForm = styled.div`padding: 69px 10px 0 12px;`;
const AutoRow = styled.div`
  display: flex;
  justify-content: space-between;
  margin-bottom: 5px;
  padding-right: 3px;
`;
const Blue = styled(Group)`
  width: 173px;
  background: #2f66a5;
`;

function Flat({ value, w, label }) {
  return (
    <FlatPick $w={w}>
      <SelectField aria-label={label} $center defaultValue={value}><option>{value}</option></SelectField>
      <Icon name="updown" />
    </FlatPick>
  );
}

const SEMI = 13.600;
const C4_BOTTOM = 63.300;
const BLACK = [1, 3, 6, 8, 10];
const isBlack = (n) => BLACK.includes(((n % 12) + 12) % 12);
const NOTES = Array.from({ length: 25 }, (_, i) => 4 - i);

function Keyboard() {
  return (
    <svg width="33" height="329" aria-hidden="true">
      <rect width="33" height="329" fill="#dddce1" />
      <rect y="204" width="33" height="23" fill="#6795d2" />
      {Array.from({ length: 15 }, (_, i) => (
        <rect key={i} x="14" y={Math.round(17.500 + i * 23.300)} width="19" height="1" fill="#333" />
      ))}
      <rect y="64" width="33" height="1" fill="#333" />
      <rect y="227" width="33" height="1" fill="#333" />
      {NOTES.filter(isBlack).map((n) => (
        <rect key={n} y={Math.round(C4_BOTTOM - n * SEMI - SEMI + 1)} width="16" height="12" fill="#1f1f20" />
      ))}
      <text x="30" y="61" fontSize="9" fontWeight="700" textAnchor="end" fill="#333">C4</text>
      <text x="30" y="224" fontSize="9" fontWeight="700" textAnchor="end" fill="#24426b">C3</text>
    </svg>
  );
}

const BAR = 67.900;
const X0 = 8.300;
const gridX = (i) => Math.round(X0 + (i * BAR) / 4);

const Roll = styled.div`
  height: 329px;
  background: #ebeae5;
`;
const Lane = styled.div`
  flex: 1;
  background: #2d2d2d;
`;
const RegionBar = styled.div`
  position: absolute;
  top: 19px;
  left: 144px;
  display: flex;
  align-items: center;
  gap: 6px;
  width: 408px;
  height: 18px;
  padding-left: 4px;
  border-radius: 3px 3px 0 0;
  background: #ffd52e;
  color: #4a3b05;
  font-size: 10px;
  font-weight: 500;
  svg { position: static; }
`;

function PianoRoll() {
  return (
    <Canvas>
      <Ruler $h={38} $bg="#4a4a4a">
        <svg width="100%" height="38">
          <rect y="19" width="100%" height="19" fill="#303030" />
          <path d="M0 2l6 6-6 6z" fill="#333" stroke="#9a9a9a" strokeWidth=".7" />
          {Array.from({ length: 130 }, (_, i) => (
            <rect key={i} x={gridX(i)} y={i % 4 ? 32 : 2} width="1" height={i % 4 ? 6 : 36} fill="#606060" />
          ))}
        </svg>
        {Array.from({ length: 9 }, (_, i) => (
          <BarNo key={i} $top={0} style={{ left: Math.round(X0 + 3 + i * BAR) }}>{i + 1}</BarNo>
        ))}
        <RegionBar>
          <Icon name="clip" />
          Inst 4
        </RegionBar>
        <svg width="552" height="38">
          {Array.from({ length: 23 }, (_, i) => (
            <rect key={i} x={gridX(i + 9)} y="31" width="1" height="7" fill="#b18f10" />
          ))}
          {[3, 4, 5, 6, 7].map((b) => (
            <rect key={b} x={gridX(b * 4)} y="20" width="1" height="18" fill="#dcb71f" />
          ))}
        </svg>
      </Ruler>
      <Roll>
        <svg width="100%" height="329">
          {NOTES.filter(isBlack).map((n) => (
            <rect key={n} y={C4_BOTTOM - n * SEMI - SEMI} width="100%" height={SEMI} fill="#dcdbd6" />
          ))}
          <rect width="144" height="329" fill="#000" opacity=".16" />
          <rect x="552" width="100%" height="329" fill="#000" opacity=".16" />
          {Array.from({ length: 260 }, (_, i) => (
            <rect key={i} x={Math.round(X0 + (i * BAR) / 16)} width="1" height="329" fill="#000" opacity=".02" />
          ))}
          {Array.from({ length: 130 }, (_, i) => (
            <rect key={i} x={gridX(i)} width="1" height="329" fill="#000" opacity={i % 4 ? 0.2 : 0.38} />
          ))}
          <rect y="63" width="100%" height="1" fill="#8b8b86" />
          <rect y="226" width="100%" height="1" fill="#8b8b86" />
          <rect y="158" width="100%" height="1" fill="#d2d1cc" />
          <path d="M144.500 0v328h407V0" fill="none" stroke="#1f5436" strokeWidth="1.500" />
          <rect x="173" y="214" width="229" height="12" fill="#b9fcd4" stroke="#1f4f35" strokeWidth="2" />
          <path d="M177 219.500h156" stroke="#2d7a50" strokeWidth="1.500" />
          <rect x="419.500" y="49.500" width="119" height="14" fill="#25814a" stroke="#153f26" />
          <path d="M423 56h75" stroke="#c9f5d5" strokeWidth="2" />
        </svg>
      </Roll>
      <Lane>
        <svg width="100%" height="203">
          {Array.from({ length: 130 }, (_, i) => (
            <rect key={i} x={gridX(i)} width="1" height="203" fill={i % 4 ? "#3c3c3c" : "#444"} />
          ))}
          <path d="M172 106.500h229M419 88.500h120" stroke="#23502f" strokeWidth="1.500" />
          <path d="M144 47.500h250l18 150h140" fill="none" stroke="#e0a25c" strokeWidth="1.300" />
          {[[144, 47], [394, 47], [412, 198]].map(([x, y]) => (
            <circle key={x} cx={x} cy={y} r="2.300" fill="#f5b163" />
          ))}
          <g fill="#e0a25c" fontSize="9" fontWeight="700">
            <text x="147" y="44">99</text>
            <text x="397" y="44">99</text>
            <text x="418" y="194">2</text>
          </g>
        </svg>
      </Lane>
      <Playhead $left={493} $top={19} width="15" height="900">
        <path d="M7.500 10v337" stroke="#8d7c48" strokeWidth="3" opacity=".6" />
        <path d="M7.500 10v890" stroke="#ecd27a" />
        <path d="M1.500.5h12v7l-6 6-6-6z" fill="#f3e07f" stroke="#6e5d1a" />
      </Playhead>
    </Canvas>
  );
}

/* ---------- articulation window ---------- */

const Win = styled.section`
  position: absolute;
  top: 255px;
  left: 994px;
  width: 678px;
  border-radius: 5px;
  background: #6a6a6a;
  box-shadow: 0 8px 24px rgba(0, 0, 0, 0.6);
`;
const WinBar = styled.header`
  display: flex;
  align-items: center;
  gap: 7px;
  height: 19px;
  padding: 0 6px;
  border-radius: 5px 5px 0 0;
  background: linear-gradient(#dcdcdc, #c6c6c6);
  color: #454545;
  h2 { flex: 1; margin: 0 51px 0 0; font-size: 11px; font-weight: 500; text-align: center; }
`;
const Frame = styled.div`
  margin: 20px 16px 0;
  padding: 0 20px 7px 19px;
  border: 1px solid #474747;
  border-radius: 4px;
  background: #505050;
`;
const Segments = styled.div`
  display: flex;
  width: 212px;
  height: 19px;
  margin: -10px auto 40px;
  border: 1px solid #343434;
  border-radius: 4px;
  overflow: hidden;
`;
const Segment = styled.button`
  flex: ${(p) => p.$grow} 1 0;
  background: ${(p) => (p.$on ? "#2f66a5" : "#454545")};
  color: #f3f3f3;
  font-size: 11px;
  font-weight: 500;
`;
const Table = styled.table`
  width: 100%;
  table-layout: fixed;
  border-collapse: separate;
  border-spacing: 0;
  background: #363636;
  font-weight: 500;
  th {
    height: 20px;
    padding: 0 5px;
    border-right: 1px solid #303030;
    border-bottom: 1px solid #262626;
    background: #494949;
    color: #eaeaea;
    font-size: 10px;
    font-weight: 500;
    text-align: left;
    white-space: nowrap;
  }
  td {
    height: ${(p) => p.$row}px;
    padding: 0 3px;
    border-right: 1px solid #2b2b2b;
    color: #f3f3f3;
    font-size: 11px;
    text-align: center;
  }
  td:first-child { text-align: left; }
  td:last-child { padding-right: 16px; }
  tbody tr:nth-child(even) td { background: #393939; }
  tbody tr:last-child td { height: 11px; }
`;
const Step = styled.div`
  display: flex;
  align-items: center;
  justify-content: flex-end;
  span { width: 32px; margin-right: 10px; text-align: center; }
  svg { margin-right: 2px; }
`;
const WinButton = styled.button`
  display: inline-flex;
  align-items: center;
  justify-content: center;
  width: ${(p) => p.$w}px;
  height: 18px;
  margin-right: 4px;
  border: 1px solid ${(p) => (p.$off ? "#474747" : "#343434")};
  border-radius: 3px;
  background: ${(p) => p.$bg || "#4d4d4d"};
  color: #b4b4b4;
  font-size: 11px;
  font-weight: 500;
`;
const WinFoot = styled.div`
  display: flex;
  margin-top: 7px;
`;
const Revert = styled.div`
  display: flex;
  padding: 10px 15px 12px;
`;
const Marks = styled.svg`
  position: absolute;
  inset: 0;
  pointer-events: none;
`;

const ARTICULATIONS = [["UB", 1], ["DB", 2], ["Marc", 3]];

function ArticulationWindow() {
  return (
    <Win>
      <WinBar>
        <Light $color="#f25e57" />
        <Light $color="#f6b53c" />
        <Light $color="#2fc845" />
        <h2>Inst 4 - UB&amp;DB</h2>
      </WinBar>
      <Frame>
        <Segments>
          <Segment $grow={69}>Switches</Segment>
          <Segment $grow={84} $on>Articulations</Segment>
          <Segment $grow={59}>Output</Segment>
        </Segments>
        <Table $row={22}>
          <colgroup><col width="241" /><col width="98" /><col width="75" /><col /></colgroup>
          <thead><tr><th>Name</th><th>Articulation ID</th><th>Channel</th><th>Symbol</th></tr></thead>
          <tbody>
            {ARTICULATIONS.map(([name, id]) => (
              <tr key={name}>
                <td>{name}</td>
                <td>{id}</td>
                <td><Step><span>{id}</span><Icon name="updown" /></Step></td>
                <td>-</td>
              </tr>
            ))}
            {Array.from({ length: 11 }, (_, i) => (
              <tr key={i}><td /><td /><td /><td /></tr>
            ))}
          </tbody>
        </Table>
        <WinFoot>
          <WinButton $w={41} aria-label="Add"><Icon name="plus" scale={0.9} /></WinButton>
          <WinButton $w={41} $off aria-label="Remove"><Icon name="minus" /></WinButton>
        </WinFoot>
      </Frame>
      <Revert><WinButton $w={59} $off $bg="#5c5c5c">Revert</WinButton></Revert>
    </Win>
  );
}

/* ---------- toolbars ---------- */

const MENUS = ["File", "Edit", "Track", "Navigate", "Record", "Mix", "View", "Window", "1", "Help"];

function ToolPicker({ third }) {
  return (
    <Group>
      <Tool $w={37} aria-label="Pointer tool"><Icon name="pointer" scale={0.9} /><Icon name="chevron" /></Tool>
      <Tool $w={37} aria-label="Second tool"><Icon name={third ? "pencil" : "marquee"} scale={third ? 0.9 : 1} /><Icon name="chevron" /></Tool>
      <Tool $w={35} $size={12} aria-label="Third tool">{third || <Icon name="snip" />}<Icon name="chevron" /></Tool>
    </Group>
  );
}
function MenuButtons({ widths }) {
  return (
    <Group>
      {["Edit", "Functions", "View"].map((m, i) => (
        <Tool key={m} $w={widths[i]}>{m}<Icon name="chevron" /></Tool>
      ))}
    </Group>
  );
}
function One({ icon, label, w = 26, bg, scale }) {
  return <Group><Tool $w={w} $bg={bg} aria-label={label}><Icon name={icon} scale={scale} /></Tool></Group>;
}
const ZoomCell = styled.div`
  display: flex;
  align-items: center;
  justify-content: space-evenly;
  width: 62px;
  & + & { border-left: 1px solid #333; }
`;

export default function App() {
  return (
    <App_>
      <Global />
      <MenuBar>
        <AppleMark><Icon name="apple" /></AppleMark>
        <MenuItem href="#app" $bold>Logic Pro X</MenuItem>
        {MENUS.map((m) => <MenuItem key={m} href={`#${m}`}>{m}</MenuItem>)}
        <Spacer />
        <Status $w={22}><Icon name="magA" scale={0.9} /></Status>
        <Status $w={24}><Icon name="wechat" scale={0.95} /></Status>
        <Status $w={11}>1</Status>
        <Status $w={26}><Icon name="qq" /></Status>
        <Status $w={26}><Icon name="tApp" /></Status>
        <Status $w={26}><Icon name="cc" scale={0.9} /></Status>
        <Status $w={24}><Icon name="cat" /></Status>
        <Status $w={38}><Speed>0KB/s<br />0KB/s</Speed></Status>
        <Status $w={18}><Icon name="disk" /></Status>
        <Status $w={26}><Icon name="xCircle" scale={0.95} /></Status>
        <Status $w={16}><Icon name="compass" scale={0.95} /></Status>
        <Status $w={28}><Icon name="bt" /></Status>
        <Status $w={23}><Icon name="wifi" scale={0.9} /></Status>
        <Status $w={29}><Icon name="vol" /></Status>
        <Status $w={30} $size={11}>100%</Status>
        <Status $w={25}><Icon name="battery" scale={0.95} /></Status>
        <Status $w={33}><Ime>拼</Ime></Status>
        <Status $w={88}>Wed 6:14 PM</Status>
        <Status $w={36}><Icon name="search" scale={0.9} /></Status>
        <Status $w={20}><Icon name="siri" /></Status>
        <Status $w={29}><Icon name="menuList" scale={0.95} /></Status>
      </MenuBar>

      <Chrome>
        <TitleRow>
          <PaleLights><Light $color="#dcdcdc" /><Light $color="#dcdcdc" /></PaleLights>
          <Title><Icon name="doc" />Legato 贝多芬《科里奥兰序曲》第276～286小节 - Tracks</Title>
        </TitleRow>
        <MainBar>
          <BigGroup $flush $mr={8}>
            <BigButton $w={14} aria-label="Library"><HalfIcon><Icon name="inbox" /></HalfIcon></BigButton>
            <BigButton $bg="#4f4f4f" aria-label="Inspector"><Icon name="info" scale={0.95} /></BigButton>
            <BigButton aria-label="Quick help"><Icon name="help" scale={0.95} /></BigButton>
            <BigButton aria-label="Toolbar"><Icon name="drawer" /></BigButton>
          </BigGroup>
          <BigGroup>
            <BigButton aria-label="Smart controls"><Icon name="knobDial" /></BigButton>
            <BigButton aria-label="Mixer"><Icon name="mixer" /></BigButton>
            <BigButton $w={30} $bg="#4f4f4f" aria-label="Editors"><Icon name="scissors" scale={0.95} /></BigButton>
          </BigGroup>
          <Spacer $grow={67} />
          <BigGroup $mr={8}>
            <BigButton $w={37} aria-label="Rewind"><Icon name="rewind" /></BigButton>
            <BigButton $w={37} aria-label="Forward"><Icon name="forward" /></BigButton>
            <BigButton $w={37} aria-label="Go to beginning"><Icon name="toStart" /></BigButton>
            <BigButton $w={37} aria-label="Play"><Icon name="play" /></BigButton>
            <BigButton $w={37} aria-label="Record"><Icon name="record" /></BigButton>
            <BigButton $w={32} aria-label="Cycle"><Icon name="cycle" /></BigButton>
          </BigGroup>
          <Lcd>
            <LcdCell $w={127}>
              <LcdRow>01:00:12:03.77</LcdRow>
              <LcdRow><span><Dim>000</Dim>8</span><span>1</span><span>4</span><span>220</span></LcdRow>
            </LcdCell>
            <LcdCell $w={127} $px={6} $color="#857948">
              <LcdRow><span><Dim>000</Dim>1</span><span>1</span><span>1</span><span><Dim>00</Dim>1</span></LcdRow>
              <LcdRow><span><Dim>00</Dim>14</span><span>1</span><span>1</span><span><Dim>00</Dim>1</span></LcdRow>
            </LcdCell>
            <LcdCell $w={86} $px={6}>
              <LcdRow>143.0000</LcdRow>
              <LcdRow $size={13}>Keep Tempo</LcdRow>
            </LcdCell>
            <LcdCell $w={61} $px={12} $weight={500}>
              <LcdRow $justify="center">4/4</LcdRow>
              <LcdRow $justify="flex-end" $size={14}>/16</LcdRow>
            </LcdCell>
            <LcdCell $w={102} $px={8}>
              <LcdRow $size={13}>No In</LcdRow>
              <LcdRow $size={13}>No Out</LcdRow>
            </LcdCell>
            <LcdCell $w={70}>
              <LcdRow><LcdTag>CPU</LcdTag><Load><LoadFill $w={15} /></Load></LcdRow>
              <LcdRow><LcdTag>HD</LcdTag><Load /></LcdRow>
            </LcdCell>
            <LcdMenu aria-label="Display mode"><Icon name="yChevron" /></LcdMenu>
          </Lcd>
          <BigGroup $mr={7}>
            <BigButton aria-label="Replace"><Icon name="shield" /></BigButton>
            <BigButton aria-label="Tuner"><Icon name="fork" /></BigButton>
            <BigButton aria-label="Solo"><SquareS>S</SquareS></BigButton>
          </BigGroup>
          <BigGroup>
            <BigButton $bg="#733dab" $fg="#e6d9f5">1234</BigButton>
            <BigButton aria-label="Metronome"><Icon name="metronome" scale={0.95} /></BigButton>
          </BigGroup>
          <Spacer $grow={49} />
          <Range aria-label="Master volume" $w={120} $track={12} $thumb={16} $ring $bg="linear-gradient(90deg, #353d3b 60%, #4a463c)" $knob="#a3a39f" defaultValue="72" />
          <Spacer $grow={54} />
          <BigGroup>
            <BigButton aria-label="List editors"><Icon name="list" /></BigButton>
            <BigButton aria-label="Note pads"><Icon name="note" /></BigButton>
            <BigButton $w={30} aria-label="Loop browser"><Icon name="loop" /></BigButton>
            <BigButton $w={30} aria-label="Browsers"><Icon name="media" /></BigButton>
          </BigGroup>
        </MainBar>
      </Chrome>

      <Body>
        <Side>
          <SideHead $gap={4}>Region: <strong>Inst 4</strong></SideHead>
          <Props $pb={1}>
            <Rows rows={REGION_ROWS} group="region" />
            <PropRow><PropText>- More</PropText></PropRow>
          </Props>
          <SideHead $gap={6}>Track: <strong>Inst 4</strong></SideHead>
          <Props $pb={1}>
            <PropRow $h={36}>
              <PropName>Icon:</PropName>
              <Tile $w={32} $h={23}><Icon name="notes" /></Tile>
            </PropRow>
            <Rows rows={TRACK_ROWS} group="track" />
          </Props>
          <Strips>
            <ChannelStrip name="Inst 4" instrument output="Bus 1" solo />
            <ChannelStrip name="Strings" send="Bus 2" output="Stereo Out" />
          </Strips>
        </Side>

        <Main>
          <Panel>
            <Bar>
              <One icon="up" label="Leave folder" />
              <MenuButtons widths={[60, 73, 55]} />
              <Group>
                <Tool $w={27} aria-label="Automation"><Icon name="automation" /></Tool>
                <Tool $w={27} $noline aria-label="Flex"><Icon name="flex" /></Tool>
              </Group>
              <One icon="catch" label="Catch" />
              <Spacer $grow={327} />
              <ToolPicker />
              <Spacer $grow={144} />
              <BarLabel htmlFor="snap">Snap:</BarLabel>
              <Picker id="snap" value="Smart" w={107} pl={8} />
              <span />
              <BarLabel htmlFor="drag">Drag:</BarLabel>
              <Picker id="drag" value="X-Fade" w={85} pl={8} />
              <One icon="wave" label="Waveform zoom" w={27} />
              <Group>
                <Tool $w={27} aria-label="Fit height"><Icon name="fitV" /></Tool>
                <Tool $w={27} $noline aria-label="Fit width"><Icon name="fitH" /></Tool>
              </Group>
              <Group>
                <ZoomCell><Icon name="zoomV" scale={0.9} /><Range aria-label="Vertical zoom" $w={38} $track={2} $thumb={8} $bg="#262626" defaultValue="75" /></ZoomCell>
                <ZoomCell><Icon name="zoomH" scale={0.9} /><Range aria-label="Horizontal zoom" $w={38} $track={2} $thumb={8} $bg="#262626" defaultValue="5" /></ZoomCell>
              </Group>
            </Bar>
            <Split>
              <TrackSide>
                <TrackTools>
                  <One icon="plus" label="Add track" />
                  <One icon="duplicate" label="Duplicate track" w={27} />
                  <Group><Tool $w={26} $bg="#a5861b" $size={14}>S</Tool></Group>
                  <Spacer />
                  <One icon="drawer" label="Track header options" scale={0.75} />
                </TrackTools>
                <TrackList>
                  <TrackRow no="3" name="Inst 2" />
                  <TrackRow no="4" name="Inst 4" on />
                  <Blank />
                </TrackList>
              </TrackSide>
              <Arrangement />
            </Split>
          </Panel>

          <Panel $fill>
            <Tabs>
              <Spacer $grow={480} />
              <Tab $on>Piano Roll</Tab>
              <Tab>Score</Tab>
              <Tab>Step Editor</Tab>
              <Spacer $grow={597} />
            </Tabs>
            <Bar $gap={7}>
              <MenuButtons widths={[51, 81, 55]} />
              <One icon="collapse" label="Collapse" />
              <One icon="automation" label="Automation" bg="#2f66a5" />
              <Group>
                <Tool $w={27} aria-label="MIDI in"><Icon name="midiIn" /></Tool>
                <Tool $w={27} $bg="#2f8b3f" aria-label="MIDI out"><Icon name="midiOut" /></Tool>
              </Group>
              <One icon="catch" label="Catch" />
              <One icon="link" label="Link" bg="#a5861b" />
              <Spacer $grow={254} />
              <ToolPicker third="V" />
              <Spacer $grow={652} />
            </Bar>
            <Split>
              <RollSide>
                <RollHead>
                  <RollInfo>One Note selected<small>in Inst 4</small></RollInfo>
                  <One icon="drawer" label="Inspector options" w={27} scale={0.75} />
                </RollHead>
                <RollMid>
                  <RollForm>
                    <FieldName as="div">Time Quantize (classic)</FieldName>
                    <Sheet $pb={6}>
                      <SheetRow $line><Flat label="Time quantize" value="1/16 Note" /><QButton>Q</QButton></SheetRow>
                      <SliderLine $mt={2}>
                        <label htmlFor="strength">Strength</label>
                        <Range id="strength" $w={88} $track={3} $thumb={9} defaultValue="97" />
                        <output>100</output>
                      </SliderLine>
                      <SliderLine>
                        <label htmlFor="swing">Swing</label>
                        <Range id="swing" $w={88} $track={3} $thumb={9} defaultValue="1" />
                        <output>0</output>
                      </SliderLine>
                    </Sheet>
                    <FieldName as="div" $mt={33}>Scale Quantize</FieldName>
                    <Sheet>
                      <SheetRow><Flat label="Scale quantize" value="Off" w={52} /><Flat label="Scale" value="Major" /><QButton>Q</QButton></SheetRow>
                    </Sheet>
                    <FieldName $mt={35} htmlFor="articulation">Articulation</FieldName>
                    <Picker id="articulation" value="UB" w={176} pl={9} h={18} />
                    <FieldName $mt={24} htmlFor="velocity">Velocity</FieldName>
                    <Sheet $pb={2}>
                      <SliderLine $mt={3}>
                        <Spacer />
                        <Range id="velocity" $w={137} $track={3} $thumb={10} min="1" max="127" defaultValue="87" />
                        <Spacer />
                        <span>89</span>
                        <Spacer />
                      </SliderLine>
                    </Sheet>
                  </RollForm>
                  <Keyboard />
                </RollMid>
                <AutoForm>
                  <FieldName as="div">Automation/MIDI</FieldName>
                  <AutoRow>
                    <Blue>
                      <Tool $w={23} aria-label="Enable automation"><Icon name="power" /></Tool>
                      <Tool $w={148}>Region</Tool>
                    </Blue>
                    <One icon="curve" label="Follow" w={28} />
                  </AutoRow>
                  <Sheet $pb={24}>
                    <SheetRow $line>
                      <FlatPick>
                        <SelectField aria-label="Automation parameter" $center $color="#e8964a" defaultValue="m"><option value="m">Any Ch.: Modulation</option></SelectField>
                        <Icon name="updownOrange" />
                      </FlatPick>
                    </SheetRow>
                  </Sheet>
                </AutoForm>
              </RollSide>
              <PianoRoll />
            </Split>
          </Panel>
        </Main>
      </Body>

      <ArticulationWindow />

      <Marks width="1600" height="918" fill="none" stroke="#d2281b" strokeWidth="3" aria-hidden="true">
        <rect x="507" y="537" width="291" height="256" />
        <rect x="799" y="403" width="216" height="514" />
        <rect x="1028" y="342" width="550" height="93" strokeWidth="4" />
        <path d="M1035 381L1075 381Q1130 378 1170 380L1217 382 1272 385 1320 386 1367 387Q1391 390 1415 389L1440 388M1038 408L1115 408 1154 409 1201 410 1229 411H1296L1320 410 1348 410 1367 410 1407 410 1444 412" strokeWidth="4" strokeLinecap="round" />
      </Marks>
    </App_>
  );
}
